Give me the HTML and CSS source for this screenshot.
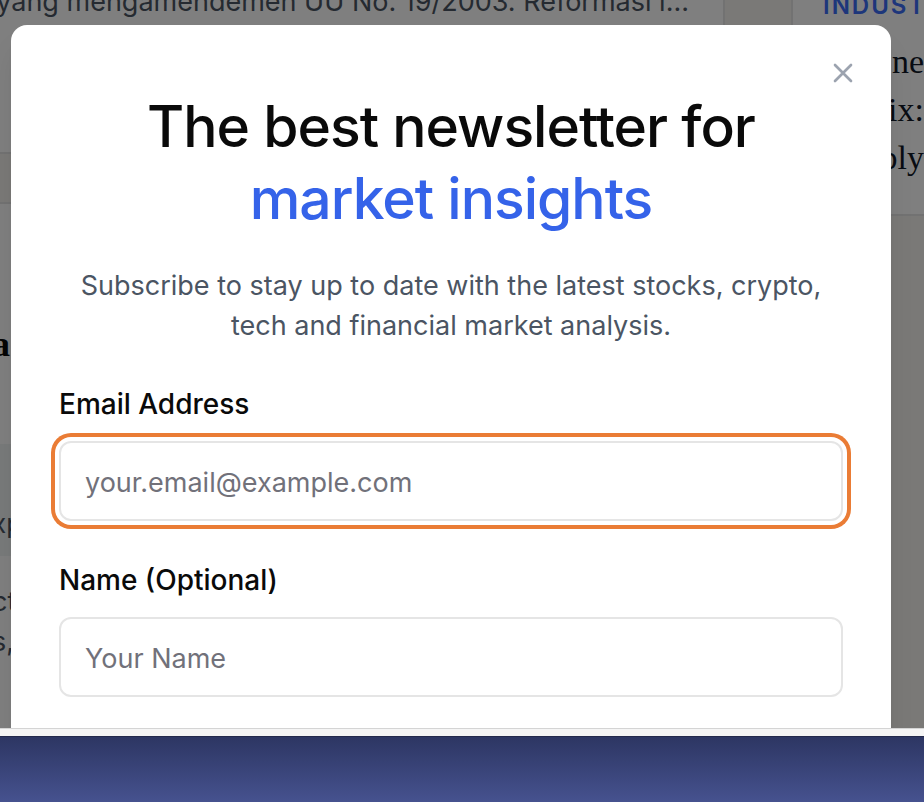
FILE: index.html
```html
<!DOCTYPE html>
<html lang="en">
<head>
<meta charset="utf-8">
<meta name="viewport" content="width=device-width, initial-scale=1">
<title>Newsletter</title>
<link rel="stylesheet" href="styles.css">
</head>
<body>
<div class="window">
  <main class="page">
    <div class="feed">
      <article class="card lead"><p class="excerpt">yang mengamendemen UU No. 19/2003. Reformasi i...</p></article>
      <article class="card story">
        <h2 class="story-title">a</h2>
        <div class="note">xp</div>
        <p class="story-text">ct<br>s,</p>
      </article>
    </div>
    <aside class="card sidebar">
      <p class="tag">INDUSTRY</p>
      <h3 class="side-title">ne<br>rix:<br>ply</h3>
    </aside>
  </main>
  <div class="overlay">
    <section class="modal" role="dialog" aria-labelledby="modal-title">
      <button class="close" type="button" aria-label="Close">
        <svg viewBox="0 0 24 24" width="32" height="32" fill="none" stroke="currentColor" stroke-width="2" stroke-linecap="round"><path d="M18 6 6 18M6 6l12 12"/></svg>
      </button>
      <h1 class="title" id="modal-title">The best newsletter for <span class="accent">market insights</span></h1>
      <p class="lede">Subscribe to stay up to date with the latest stocks, crypto, tech and financial market analysis.</p>
      <form class="form">
        <div class="field">
          <label for="email">Email Address</label>
          <input class="active" id="email" type="email" placeholder="your.email@example.com">
        </div>
        <div class="field">
          <label for="name">Name (Optional)</label>
          <input id="name" type="text" placeholder="Your Name">
        </div>
      </form>
    </section>
  </div>
</div>
<div class="window-edge"></div>
<div class="desktop"></div>
</body>
</html>
```
FILE: styles.css
```css
* { box-sizing: border-box; }

body {
  margin: 0;
  height: 100vh;
  display: flex;
  flex-direction: column;
  overflow: hidden;
  font-family: Inter, "Liberation Sans", sans-serif;
  color: #0a0a0a;
}

h1, h2, h3, p { margin: 0; }

.window {
  position: relative;
  flex: 1;
  min-height: 0;
  overflow: hidden;
}

.window-edge {
  height: 8px;
  background: #f5f5f5;
  border-top: 1px solid #d4d4d4;
}

.desktop {
  height: 66px;
  background: linear-gradient(#2d3663, #46528f);
  border-top: 1px solid #23294c;
}

/* Page behind the dialog */
.page {
  height: 100%;
  display: grid;
  grid-template-columns: 1fr 133px;
  column-gap: 66px;
  align-items: start;
  background: #f5f2ee;
}

.card {
  background: #fff;
  border: 2px solid #e5e5e5;
}

.feed {
  height: 100%;
  display: flex;
  flex-direction: column;
  gap: 48px;
  min-width: 0;
}

.feed .card { border-left: 0; }

.lead {
  height: 154px;
  display: flex;
  justify-content: flex-end;
  border-top: 0;
  padding-right: 34px;
}

.excerpt {
  margin-top: -18px;
  font-size: 27px;
  line-height: 40px;
  white-space: nowrap;
  color: #4b5563;
}

.story {
  flex: 1;
  border-bottom: 0;
}

.story-title {
  margin: 116px 0 0 -8px;
  font: bold 36px/48px "Liberation Serif", serif;
}

.note {
  margin-top: 76px;
  padding: 60px 0 12px;
  text-indent: -8px;
  background: #f0f5f5;
  font-size: 26px;
  line-height: 40px;
  color: #4b5563;
}

.story-text {
  margin: 26px 0 0 -8px;
  font-size: 27px;
  line-height: 40px;
  color: #4b5563;
}

.sidebar {
  border-top: 0;
  border-right: 0;
  padding: 0 0 32px 30px;
  overflow: hidden;
}

.tag {
  margin-top: -10px;
  font-size: 24px;
  font-weight: 600;
  line-height: 32px;
  letter-spacing: 2px;
  color: #3b6cf6;
}

.side-title {
  margin-top: 16px;
  font: 34px/48px "Liberation Serif", serif;
  text-align: right;
  color: #111827;
}

/* Dialog */
.overlay {
  position: absolute;
  inset: 0;
  padding: 25px 33px 0 11px;
  background: rgba(0, 0, 0, 0.5);
}

.modal {
  position: relative;
  min-height: 800px;
  padding: 66px 48px 48px;
  border-radius: 16px;
  background: #fff;
  box-shadow: 0 20px 30px -6px rgba(0, 0, 0, 0.1), 0 8px 12px -8px rgba(0, 0, 0, 0.1);
}

.close {
  position: absolute;
  top: 32px;
  right: 32px;
  padding: 0;
  border: 0;
  background: none;
  color: #9ca3af;
}

.close svg { display: block; }

.title {
  font-size: 57px;
  font-weight: 500;
  line-height: 72px;
  letter-spacing: -1px;
  text-align: center;
}

.accent {
  display: block;
  color: #3563e9;
}

.lede {
  margin-top: 31px;
  font-size: 27px;
  line-height: 40px;
  text-align: center;
  color: #4b5563;
}

.form {
  display: grid;
  gap: 42px;
  margin-top: 43px;
}

.field {
  display: grid;
  gap: 22px;
}

label {
  font-size: 28px;
  font-weight: 500;
  line-height: 30px;
}

.field + .field { padding-top: 2px; }

input {
  width: 100%;
  height: 80px;
  padding: 2px 24px 0;
  border: 2px solid #e5e5e5;
  border-radius: 12px;
  background: #fff;
  outline: 0;
  font: inherit;
  font-size: 27px;
}

input::placeholder { color: #71717a; opacity: 1; }

.active { box-shadow: 0 0 0 4px #fff, 0 0 0 8px #ea7c35; }
```
